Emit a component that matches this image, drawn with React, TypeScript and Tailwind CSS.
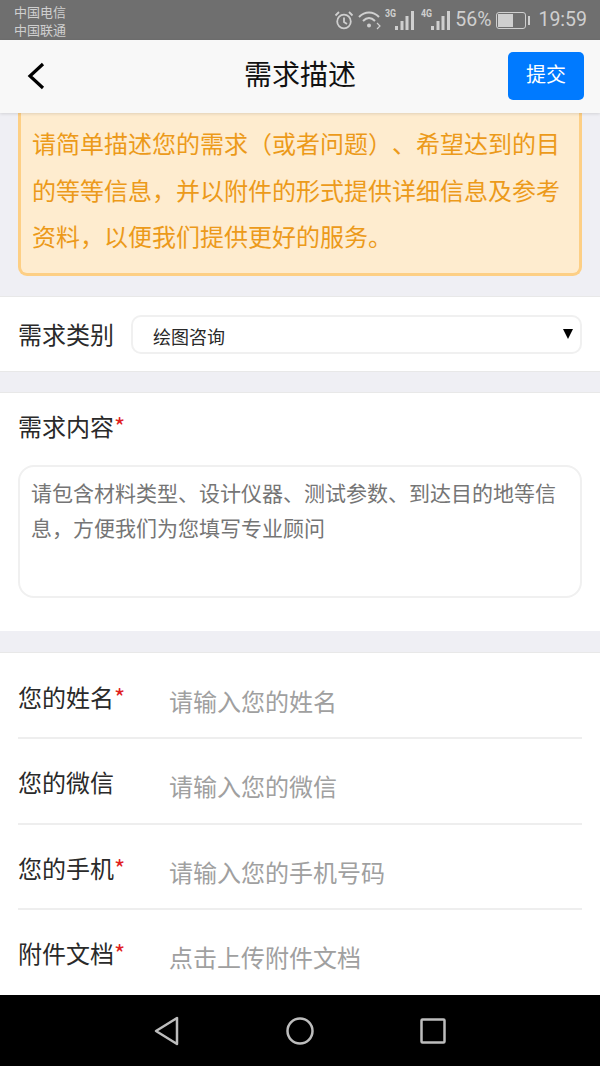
const cjk = { fontFamily: '"Noto Sans CJK SC", sans-serif' };

function Signal({ label }: { label: string }) {
  return (
    <div className="relative w-[29px] h-[24px]">
      <span className="absolute left-0 top-[1px] text-[11px] leading-[10px] font-bold scale-x-[0.8] origin-left text-[#cfcfcf] font-['Roboto']">{label}</span>
      <svg viewBox="0 0 29 24" className="absolute inset-0 w-[29px] h-[24px]" fill="#cfcfcf">
        <rect x="10" y="18" width="3" height="4" />
        <rect x="15.5" y="13" width="3" height="9" />
        <rect x="20.5" y="8" width="3" height="14" />
        <rect x="26" y="3" width="3" height="19" />
      </svg>
    </div>
  );
}

function StatusBar() {
  return (
    <div className="h-10 shrink-0 bg-[#6f6f6f] flex justify-between pl-[14px] pr-[13px]">
      <div className="text-[13px] leading-[18px] text-[#cfcfcf] pt-[3px]" style={cjk}>
        <div>中国电信</div>
        <div>中国联通</div>
      </div>
      <div className="flex items-center text-[#cfcfcf] font-['Roboto'] text-[19.5px]">
        <svg viewBox="0 0 20 20" className="w-[20px] h-[20px] mt-[-1px]" fill="none" stroke="#cfcfcf" strokeWidth="1.8">
          <circle cx="10" cy="11.5" r="6.8" />
          <path d="M10 7.5V12L13 14M1.5 5.5L5 2M18.5 5.5L15 2" />
        </svg>
        <svg viewBox="0 0 24 20" className="w-[24px] h-[20px] ml-[4px]" fill="none" stroke="#cfcfcf" strokeWidth="2">
          <path d="M1 7C7 1 15 1 21 7M5 11C9 7 13 7 17 11" />
          <circle cx="11" cy="15.5" r="2" fill="#cfcfcf" stroke="none" />
          <path d="M19 13L22 16L19 19" strokeWidth="1.2" />
        </svg>
        <div className="ml-[3px]">
          <Signal label="3G" />
        </div>
        <div className="ml-[7px]">
          <Signal label="4G" />
        </div>
        <span className="ml-[5px] leading-[24px]">56%</span>
        <div className="flex items-center ml-[5px] mr-[8px]">
          <div className="w-[30px] h-[17px] rounded-[3px] border-[1.5px] border-[#cfcfcf] p-[1px]">
            <div className="w-[15px] h-full bg-[#cfcfcf]" />
          </div>
          <div className="w-[2px] h-[9px] ml-[2px] bg-[#cfcfcf]" />
        </div>
        <span className="leading-[24px]">19:59</span>
      </div>
    </div>
  );
}

function Header() {
  return (
    <header className="relative z-10 h-[73px] shrink-0 bg-[#f8f8f8] shadow-[0_1px_3px_rgba(0,0,0,0.12)] flex items-center justify-between pl-[26px] pr-[16px]">
      <svg viewBox="0 0 20 28" className="w-[20px] h-[28px] -mt-[1px]" fill="none" stroke="#000" strokeWidth="3.2">
        <path d="M17 2L4 14L17 26" />
      </svg>
      <h1 className="absolute inset-x-0 text-center text-[28px] leading-[40px] top-[13px] text-[#111]" style={cjk}>需求描述</h1>
      <button className="relative w-[76px] h-[48px] -mt-[1px] pb-[5px] rounded-[5px] bg-[#007aff] text-white text-[20px]" style={cjk}>提交</button>
    </header>
  );
}

function Field({ label, required, placeholder, last }: { label: string; required?: boolean; placeholder: string; last?: boolean }) {
  return (
    <div className={`flex h-[85.3px] pt-[26px] ${last ? '' : 'border-b-2 border-[#eeeeee]'}`}>
      <div className="w-[151px] text-[24px] leading-[34px] text-[#2a2a2a]">
        {label}
        {required && <span className="text-[#e02020]">*</span>}
      </div>
      <div className="text-[24px] leading-[34px] text-[#a0a0a0] pt-[4px]">{placeholder}</div>
    </div>
  );
}

export default function App() {
  return (
    <div className="w-[600px] h-[1066px] flex flex-col overflow-hidden bg-[#efeff4] [text-spacing-trim:space-all]" style={cjk}>
      <StatusBar />
      <Header />
      <main className="flex-1 min-h-0 overflow-hidden">
        <div className="mx-[18px] h-[163px] rounded-b-[9px] border-[3px] border-t-0 border-[#fdcf85] bg-[#feeccf] pl-[11px] pr-[12px] pt-[7px] text-[24px] leading-[46.5px] text-[#ec9a1a]">
          请简单描述您的需求（或者问题）、希望达到的目的等等信息，并以附件的形式提供详细信息及参考资料，以便我们提供更好的服务。
        </div>

        <section className="mt-[20px] h-[76px] bg-white border-y border-[#e8e8e8] flex items-center gap-[17px] pl-[18px] pr-[18px]">
          <div className="text-[24px] leading-[34px] text-[#2a2a2a] shrink-0">需求类别</div>
          <div className="relative flex-1 h-[39px] mt-[1px] rounded-[10px] border-2 border-[#f0f0f0] pl-[20px] pt-[4px] flex items-center text-[18px] text-[#2a2a2a]">
            绘图咨询
            <svg viewBox="0 0 10 10" className="absolute right-[7px] top-[12px] w-[10px] h-[10px]" fill="#000">
              <path d="M0 0H10L5 10Z" />
            </svg>
          </div>
        </section>

        <section className="mt-[20px] h-[239px] bg-white border-t border-[#e8e8e8] px-[18px] pt-[16px]">
          <div className="text-[24px] leading-[34px] text-[#2a2a2a]">
            需求内容<span className="text-[#e02020]">*</span>
          </div>
          <div className="mt-[22px] h-[133px] rounded-[16px] border-2 border-[#f0f0f0] pl-[11px] pr-[12px] pt-[8px] text-[21px] leading-[35px] text-[#757575]">
            请包含材料类型、设计仪器、测试参数、到达目的地等信息，方便我们为您填写专业顾问
          </div>
        </section>

        <section className="mt-[21px] bg-white border-t border-[#e8e8e8] px-[18px] pt-[1px] h-[344px]">
          <Field label="您的姓名" required placeholder="请输入您的姓名" />
          <Field label="您的微信" placeholder="请输入您的微信" />
          <Field label="您的手机" required placeholder="请输入您的手机号码" />
          <Field label="附件文档" required placeholder="点击上传附件文档" last />
        </section>
      </main>
      <nav className="h-[71px] shrink-0 bg-black flex items-center justify-between pl-[154px] pr-[154px]">
        <svg viewBox="0 0 26 30" className="w-[26px] h-[30px]" fill="none" stroke="#bdbdbd" strokeWidth="2.5" strokeLinejoin="round">
          <path d="M23 2V28L2 15Z" />
        </svg>
        <svg viewBox="0 0 30 30" className="w-[30px] h-[30px]" fill="none" stroke="#bdbdbd" strokeWidth="2.5">
          <circle cx="15" cy="15" r="12.5" />
        </svg>
        <svg viewBox="0 0 26 26" className="w-[26px] h-[26px]" fill="none" stroke="#bdbdbd" strokeWidth="2.5" strokeLinejoin="round">
          <rect x="1.5" y="1.5" width="23" height="23" rx="1" />
        </svg>
      </nav>
    </div>
  );
}
